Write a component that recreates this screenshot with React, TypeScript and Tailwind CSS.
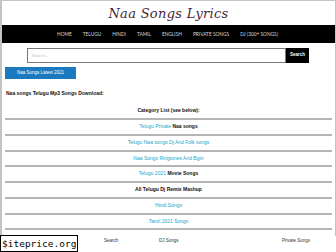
import React from "react";

const rows: { parts: { t: string; c: "link" | "bold" }[] }[] = [
  { parts: [{ t: "Telugu Private ", c: "link" }, { t: "Naa songs", c: "bold" }] },
  { parts: [{ t: "Telugu Naa songs Dj And Folk songs", c: "link" }] },
  { parts: [{ t: "Naa Songs Ringtones And Bgm", c: "link" }] },
  { parts: [{ t: "Telugu 2021 ", c: "link" }, { t: "Movie Songs", c: "bold" }] },
  { parts: [{ t: "All Telugu Dj Remix Mashup", c: "bold" }] },
  { parts: [{ t: "Hindi Songs", c: "link" }] },
  { parts: [{ t: "Tamil 2021 Songs", c: "link" }] },
];

const nav = ["HOME", "TELUGU", "HINDI", "TAMIL", "ENGLISH", "PRIVATE SONGS", "DJ (300+ SONGS)"];

export default function App() {
  return (
    <div className="relative w-[336px] h-[252px] overflow-hidden bg-white font-['Liberation_Sans',Arial,sans-serif]">
      <div className="h-[236px] border-l-2 border-t border-r border-[#c4c4c4] flex flex-col">
        <div className="h-[24px] flex items-center justify-center pt-[1px]">
          <span className="font-['DejaVu_Serif',serif] italic text-[13px] leading-none text-[#4a1f3a] tracking-[0.3px]">
            Naa Songs Lyrics
          </span>
        </div>
        <div className="h-[18px] bg-black flex items-center justify-center gap-[11px] pr-[2px]">
          {nav.map((n) => (
            <span key={n} className="text-[4.8px] leading-none text-[#d8d8d8] font-['Lato',sans-serif]">
              {n}
            </span>
          ))}
        </div>
        <div className="flex pl-[25px] mt-[5px] h-[15px]">
          <div className="w-[259px] border border-[#777] bg-white flex items-center pl-[4px]">
            <span className="text-[4px] text-[#bbb]">Search...</span>
          </div>
          <div className="w-[23px] bg-black flex items-center justify-center">
            <span className="text-[4.5px] font-bold text-white">Search</span>
          </div>
        </div>
        <div className="pl-[3px] mt-[4px]">
          <div className="w-[71px] h-[12px] bg-[#1b79c0] flex items-center justify-center">
            <span className="text-[4.5px] text-white">Naa Songs Latest 2021</span>
          </div>
        </div>
        <div className="pl-[4px] mt-[12px] h-[6px] flex items-center">
          <span className="text-[5px] font-bold text-[#111]">Naa songs Telugu Mp3 Songs Download:</span>
        </div>
        <div className="mt-[11px] h-[6px] flex items-center justify-center">
          <span className="text-[5px] font-bold text-[#111]">Category List (see below):</span>
        </div>
        <div className="mt-[4px] mx-[3px] flex flex-col">
          {rows.map((r, i) => (
            <div
              key={i}
              className="h-[15.75px] border-t-2 border-[#b5b5b5] flex items-center justify-center"
            >
              <span className="text-[5px]">
                {r.parts.map((p, j) => (
                  <span
                    key={j}
                    className={p.c === "link" ? "text-[#22a6c9]" : "font-bold text-[#111]"}
                  >
                    {p.t}
                  </span>
                ))}
              </span>
            </div>
          ))}
          <div className="border-t-2 border-[#b5b5b5]" />
        </div>
      </div>
      <div className="h-[12px] relative">
        <span className="absolute left-[104px] top-[2px] text-[4.5px] text-[#333]">Search</span>
        <span className="absolute left-[159px] top-[2px] text-[4.5px] text-[#333]">DJ Songs</span>
        <span className="absolute left-[282px] top-[2px] text-[4.5px] text-[#333]">Private Songs</span>
      </div>
      <div className="absolute left-0 bottom-0 h-[17px] px-[1px] bg-white border border-black flex items-center">
        <span className="font-['DejaVu_Sans_Mono',monospace] text-[9.5px] leading-none text-black">$iteprice.org</span>
      </div>
    </div>
  );
}
